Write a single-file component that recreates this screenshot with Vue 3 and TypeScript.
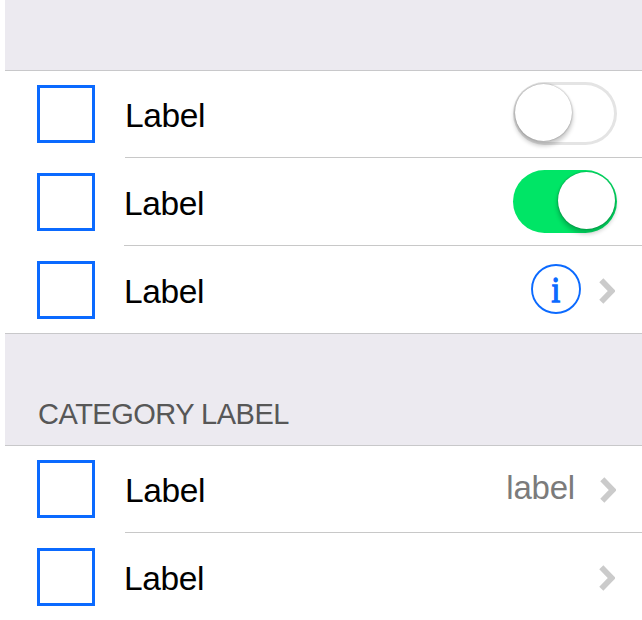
<script setup lang="ts">
import { ref } from 'vue'

type Accessory = 'toggle' | 'info' | 'detail' | 'disclosure'

interface Row {
  id: number
  label: string
  accessory: Accessory
  on?: boolean
  detail?: string
}

interface Group {
  id: string
  title: string
  rows: Row[]
}

const groups = ref<Group[]>([
  {
    id: 'controls',
    title: '',
    rows: [
      { id: 1, label: 'Label', accessory: 'toggle', on: false },
      { id: 2, label: 'Label', accessory: 'toggle', on: true },
      { id: 3, label: 'Label', accessory: 'info' },
    ],
  },
  {
    id: 'category',
    title: 'CATEGORY LABEL',
    rows: [
      { id: 4, label: 'Label', accessory: 'detail', detail: 'label' },
      { id: 5, label: 'Label', accessory: 'disclosure' },
    ],
  },
])

const flip = (row: Row) => {
  row.on = !row.on
}
</script>

<template>
  <main class="settings">
    <section v-for="group in groups" :key="group.id" class="group">
      <header class="group-header" :class="{ titled: group.title }">
        <h2 v-if="group.title" class="group-title">{{ group.title }}</h2>
      </header>
      <div class="rows">
        <div v-for="row in group.rows" :key="row.id" class="row">
          <span class="thumb"></span>
          <div class="content">
            <span class="label">{{ row.label }}</span>
            <button
              v-if="row.accessory === 'toggle'"
              type="button"
              class="toggle"
              :class="{ on: row.on }"
              role="switch"
              :aria-checked="row.on"
              @click="flip(row)"
            >
              <span class="knob"></span>
            </button>
            <template v-else>
              <svg v-if="row.accessory === 'info'" class="info" viewBox="0 0 50 50">
                <circle cx="25" cy="25" r="24" />
                <text transform="translate(24.9 37.5) scale(0.85 1)" text-anchor="middle">i</text>
              </svg>
              <span v-if="row.detail" class="detail">{{ row.detail }}</span>
              <svg class="chevron" viewBox="0 0 16 26">
                <path d="M2.3 2.3 12.7 13 2.3 23.7" />
              </svg>
            </template>
          </div>
        </div>
      </div>
    </section>
  </main>
</template>

<style>
body {
  margin: 0;
  background: #fff;
}
</style>

<style scoped>
.settings {
  box-sizing: border-box;
  height: 620px;
  padding-left: 5px;
  overflow: hidden;
  background: #fff;
  font-family: "Liberation Sans", Arial, sans-serif;
  color: #000;
}

.group-header {
  box-sizing: border-box;
  height: 70px;
  background: #eceaf0;
}

.group-header.titled {
  height: 111px;
  padding: 63px 0 0 33px;
}

.group-title {
  margin: 0;
  font-size: 29px;
  font-weight: 400;
  line-height: 34px;
  letter-spacing: -0.5px;
  color: #575757;
  white-space: nowrap;
}

.row {
  box-sizing: border-box;
  display: flex;
  height: 88px;
  padding-left: 32px;
}

.row:first-child {
  border-top: 1px solid #c8c8ca;
}

.row:last-child {
  border-bottom: 1px solid #c8c8ca;
}

.thumb {
  box-sizing: border-box;
  flex: none;
  width: 58px;
  height: 58px;
  margin-top: 15px;
  border: 3px solid #0b6aff;
}

.row:first-child .thumb {
  margin-top: 14px;
}

.content {
  box-sizing: border-box;
  display: flex;
  flex: 1;
  align-items: flex-start;
  height: 88px;
  margin-left: 29px;
  padding: 12px 25px 0 0;
  border-bottom: 1px solid #c8c8c8;
}

.row:first-child .content {
  height: 87px;
  margin-left: 30px;
  padding-top: 11px;
}

.row:last-child .content {
  border-bottom: 0;
}

.label {
  margin: 14px auto 0 0;
  font-size: 33.5px;
  line-height: 40px;
  letter-spacing: -0.4px;
}

.toggle {
  box-sizing: border-box;
  display: flex;
  align-items: flex-start;
  width: 104px;
  height: 63px;
  padding: 0;
  border: 0;
  border-radius: 32px;
  background: #fff;
  box-shadow: inset 0 0 0 3px #e4e4e4;
}

.toggle.on {
  justify-content: flex-end;
  background: #00e566;
  box-shadow: none;
}

.knob {
  width: 57px;
  height: 57px;
  margin: 2px 0 0 2px;
  border-radius: 50%;
  background: #fff;
  box-shadow: 0 0 2px rgba(0, 0, 0, 0.4), 0 4px 4px 1px rgba(0, 0, 0, 0.2);
}

.on .knob {
  margin: 2px 2px 0 0;
}

.info {
  width: 50px;
  height: 50px;
  margin: 6px 18px 0 0;
}

.info circle {
  fill: none;
  stroke: #0b6aff;
  stroke-width: 1.9;
}

.info text {
  font-family: "Liberation Serif", "Times New Roman", serif;
  font-size: 36.5px;
  fill: #0b6aff;
  stroke: #0b6aff;
  stroke-width: 1.4px;
}

.detail {
  margin: 11px 25px 0 0;
  font-size: 33px;
  line-height: 40px;
  letter-spacing: -0.2px;
  color: #7b7b7b;
}

.chevron {
  width: 16px;
  height: 26px;
  margin: 20px 2px 0 0;
}

.row:first-child .chevron {
  margin: 20px 1px 0 0;
}

.chevron path {
  fill: none;
  stroke: #cbcbcb;
  stroke-width: 5.7;
}
</style>
